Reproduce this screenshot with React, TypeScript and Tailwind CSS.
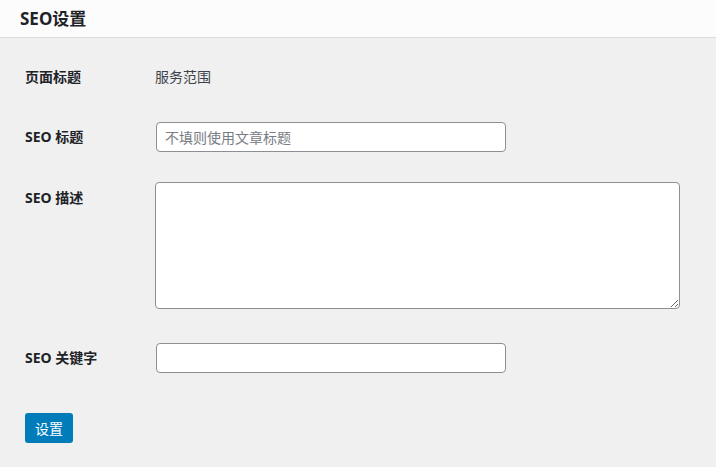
import React from "react";

const font = {
  fontFamily: '"Segoe UI", "Noto Sans", "Noto Sans CJK SC", sans-serif',
};

export default function App() {
  return (
    <div className="w-[716px] h-[467px] bg-[#f0f0f1] text-[#1d2327] overflow-hidden" style={font}>
      <div className="h-[38px] bg-[#fcfcfc] border-b border-[#dcdcde] pl-[20px] flex items-center">
        <h2 className="text-[17px] font-bold leading-none text-[#1d2327]">SEO设置</h2>
      </div>
      <div className="pl-[25px] pt-[29px]">
        <div className="flex items-center h-[20px]">
          <div className="w-[130px] text-[14px] font-bold leading-[20px]">页面标题</div>
          <div className="text-[14px] leading-[20px] text-[#3c434a]">服务范围</div>
        </div>
        <div className="flex items-center mt-[35px]">
          <div className="w-[131px] text-[14px] font-bold leading-[20px]">SEO 标题</div>
          <input
            className="w-[350px] h-[30px] bg-white border border-[#8c8f94] rounded-[4px] px-[8px] text-[14px] text-[#2c3338] placeholder:text-[#787c82] outline-none"
            placeholder="不填则使用文章标题"
            style={font}
          />
        </div>
        <div className="flex items-start mt-[30px]">
          <div className="w-[130px] text-[14px] font-bold leading-[20px] mt-[6px]">SEO 描述</div>
          <textarea
            className="w-[525px] h-[127px] bg-white border border-[#8c8f94] rounded-[4px] px-[8px] py-[4px] text-[14px] outline-none block"
            style={font}
          />
        </div>
        <div className="flex items-center mt-[34px]">
          <div className="w-[131px] text-[14px] font-bold leading-[20px]">SEO 关键字</div>
          <input
            className="w-[350px] h-[30px] bg-white border border-[#8c8f94] rounded-[4px] px-[8px] text-[14px] outline-none"
            style={font}
          />
        </div>
        <button
          className="mt-[40px] w-[48px] h-[30px] bg-[#007cba] text-white text-[14px] rounded-[3px] flex items-center justify-center"
          style={font}
        >
          设置
        </button>
      </div>
    </div>
  );
}
